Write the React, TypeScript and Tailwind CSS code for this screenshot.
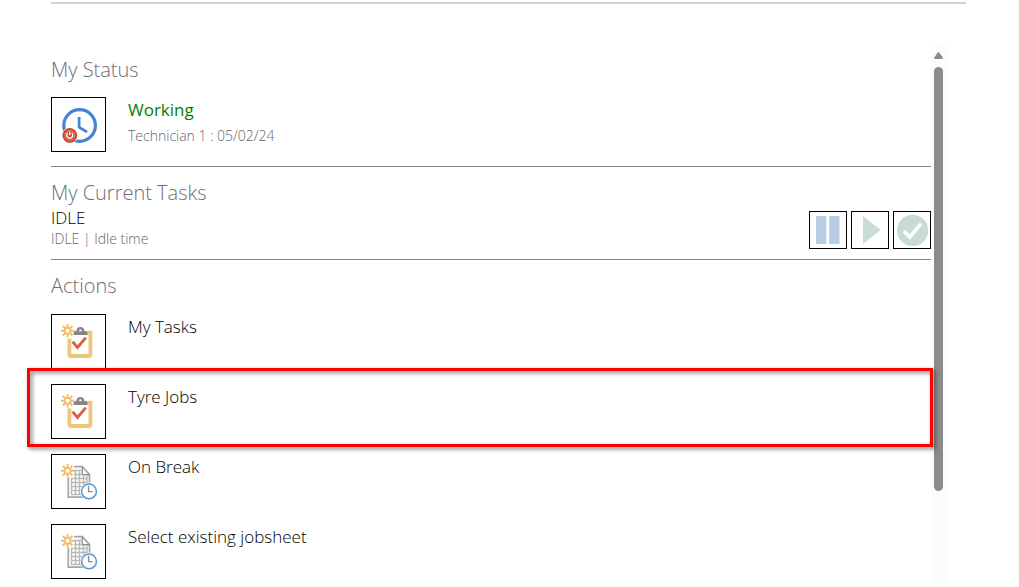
import React from "react";

function ClockStopIcon() {
  return (
    <svg viewBox="1 1 53 53" className="block size-full" fill="none" aria-hidden="true">
      <circle cx="28.6" cy="28.5" r="15.8" stroke="#4684d0" strokeWidth="3.2" />
      <path d="M28.1 20v10.2l8 4.9" stroke="#4684d0" strokeWidth="2.7" />
      <circle cx="18.8" cy="38.4" r="8" fill="#fff" />
      <circle cx="18.8" cy="38.4" r="7.4" fill="#c94a2f" />
      <circle cx="18.8" cy="38.4" r="5" stroke="#dc8d7b" strokeWidth="0.9" />
      <path d="M16.8 36a3 3 0 1 0 4 0M18.8 34.4v3.8" stroke="#fff" strokeWidth="1.4" />
    </svg>
  );
}

function Spark() {
  return (
    <g stroke="#f0be70">
      <circle cx="16.6" cy="16.7" r="3" strokeWidth="1.9" />
      <path
        d="M16.6 10v3.2M16.6 20.1v3.3M10 16.7h3.2M20 16.7h3.3M11.8 11.9l2.4 2.4M19 19.1l2.4 2.4M11.8 21.5l2.4-2.4M19 14.3l2.4-2.4"
        strokeWidth="2"
      />
    </g>
  );
}

function ClipboardIcon() {
  return (
    <svg viewBox="1 1 53 53" className="block size-full" fill="none" aria-hidden="true">
      <path d="M18.4 24.5v16q0 1.5 1.5 1.5h18q1.5 0 1.5-1.5V18.7h-3" stroke="#efc77b" strokeWidth="3.8" />
      <path
        d="M22.6 21v-2.4q0-1.5 1.6-1.5h1.2q.3-4.1 4-4.1t4 4.1h1.3q1.9 0 1.9 1.5V21zM29.4 15.2a1.2 1.2 0 1 0 0 2.4 1.2 1.2 0 0 0 0-2.4z"
        fill="#858585"
        fillRule="evenodd"
      />
      <path d="M21.6 27.6l4.9 5.8 8.3-9.8" stroke="#d9624a" strokeWidth="3" />
      <Spark />
    </svg>
  );
}

function SheetClockIcon() {
  return (
    <svg viewBox="1 1 53 53" className="block size-full" fill="none" aria-hidden="true">
      <path d="M17.3 23.5v19.6H38.5V20.6L31.3 12.7H23" stroke="#a6a6a6" strokeWidth="1.7" />
      <path d="M31.2 12.7v8h7.6" stroke="#8f8f8f" strokeWidth="1.4" />
      <path
        d="M20.5 24v17M24.5 16v25M28.5 16v25M32.5 22v19M36 22v8M23 16.5h7M23 20.5h7M20 24.5h16M20 28.5h16M20 32.5h12M20 36.5h10M20 40.5h11"
        stroke="#b8b8b8"
        strokeWidth="1.4"
      />
      <circle cx="38" cy="37.4" r="8.8" fill="#fff" />
      <circle cx="38" cy="37.4" r="7.4" fill="#fff" stroke="#5b98d2" strokeWidth="1.5" />
      <path d="M37.6 31.7v6h4" stroke="#8c8c8c" strokeWidth="1.3" />
      <Spark />
    </svg>
  );
}

function PauseIcon() {
  return (
    <svg viewBox="1 1 36 36" className="block size-full" fill="#b8cce4" aria-hidden="true">
      <path d="M7 5h10.3v28H7zM20.2 5h10.3v28H20.2z" />
    </svg>
  );
}

function PlayIcon() {
  return (
    <svg viewBox="1 1 36 36" className="block size-full" fill="#c8dcd5" aria-hidden="true">
      <path d="M12 5l17.6 14L12 33z" />
    </svg>
  );
}

function DoneIcon() {
  return (
    <svg viewBox="1 1 36 36" className="block size-full" fill="none" aria-hidden="true">
      <circle cx="19.6" cy="19.4" r="15.6" fill="#c8dcd5" />
      <path d="M10.8 20l6 6L28 12.6" stroke="#fff" strokeWidth="3.6" />
    </svg>
  );
}

const actions = [
  { label: "My Tasks", Icon: ClipboardIcon, highlighted: false },
  { label: "Tyre Jobs", Icon: ClipboardIcon, highlighted: true },
  { label: "On Break", Icon: SheetClockIcon, highlighted: false },
  { label: "Select existing jobsheet", Icon: SheetClockIcon, highlighted: false },
];

const taskControls = [
  { label: "Pause", Icon: PauseIcon },
  { label: "Start", Icon: PlayIcon },
  { label: "Complete", Icon: DoneIcon },
];

function Heading({ children }: { children: React.ReactNode }) {
  return <h2 className="text-xl leading-7 font-light text-[#6e6e6e]">{children}</h2>;
}

export default function App() {
  return (
    <div className="flex h-screen flex-col overflow-hidden bg-white pr-[73px] pl-[51px] pt-[2px] font-['Open_Sans','Noto_Sans',sans-serif] text-black">
      <hr className="mr-[-20px] h-[2px] shrink-0 border-0 bg-[#ced4da]" />
      <div className="mt-10 flex min-h-0 flex-1">
        <main className="min-w-0 flex-1 pt-3">
          <section className="border-b border-[#858585] pb-[14px]">
            <Heading>My Status</Heading>
            <div className="mt-[13px] flex gap-[22px]">
              <button type="button" aria-label="Change status" className="size-[55px] shrink-0 border border-black">
                <ClockStopIcon />
              </button>
              <div>
                <p className="text-[17px] leading-[26px] text-[#008000]">Working</p>
                <p className="text-sm leading-[26px] font-light text-[#666666]">Technician 1 : 05/02/24</p>
              </div>
            </div>
          </section>

          <section className="border-b border-[#858585] pt-3 pb-[10px]">
            <Heading>My Current Tasks</Heading>
            <div className="flex items-end justify-between">
              <div>
                <p className="text-[17px] leading-[22px] font-light">IDLE</p>
                <p className="text-sm leading-5 font-light text-[#666666]">IDLE | Idle time</p>
              </div>
              <div className="flex gap-1">
                {taskControls.map(({ label, Icon }) => (
                  <button key={label} type="button" aria-label={label} className="size-[38px] border border-black">
                    <Icon />
                  </button>
                ))}
              </div>
            </div>
          </section>

          <section className="pt-3">
            <Heading>Actions</Heading>
            <ul className="mt-[14px] flex flex-col gap-[15px]">
              {actions.map(({ label, Icon, highlighted }) => (
                <li key={label} className="relative">
                  <button type="button" className="flex w-full gap-[22px] text-left">
                    <span className="size-[55px] shrink-0 border border-black bg-white">
                      <Icon />
                    </span>
                    <span className="text-[17px] leading-[26px] font-light">{label}</span>
                  </button>
                  {highlighted && (
                    <div className="pointer-events-none absolute -top-4 -right-[2px] -bottom-2 -left-6 z-10 border-3 border-[#ff0000] drop-shadow-[2px_2px_2px_rgba(0,0,0,0.55)]" />
                  )}
                </li>
              ))}
            </ul>
          </section>
        </main>

        <div aria-hidden="true" className="flex w-[15px] shrink-0 flex-col items-center bg-[#fcfcfc] pt-2">
          <svg viewBox="0 0 9 7" className="h-[7px] w-[9px]" fill="#8b8b8b">
            <path d="M3.8.5q.7-.6 1.4 0L8.8 5.6q.2 1.4-.8 1.4H1Q0 7 .2 5.6z" />
          </svg>
          <div className="mt-2 h-[424px] w-[9px] rounded-full bg-[#8b8b8b]" />
        </div>
      </div>
    </div>
  );
}
